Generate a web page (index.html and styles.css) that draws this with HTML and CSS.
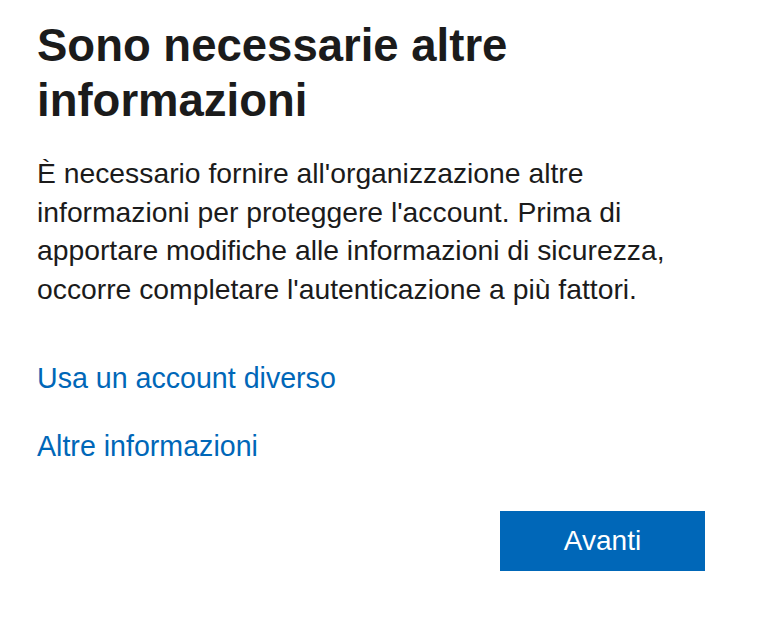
FILE: index.html
```html
<!DOCTYPE html>
<html lang="it">
<head>
<meta charset="utf-8">
<title>Sono necessarie altre informazioni</title>
<link rel="stylesheet" href="styles.css">
</head>
<body>
<main class="panel">
  <h1 class="title">Sono necessarie altre informazioni</h1>
  <p class="desc">È necessario fornire all'organizzazione altre informazioni per proteggere l'account. Prima di apportare modifiche alle informazioni di sicurezza, occorre completare l'autenticazione a più fattori.</p>
  <div class="links">
    <a class="link" href="#">Usa un account diverso</a>
    <a class="link" href="#">Altre informazioni</a>
  </div>
  <div class="actions">
    <button class="btn-primary" type="button">Avanti</button>
  </div>
</main>
</body>
</html>
```
FILE: styles.css
```css
html, body {
  margin: 0;
  padding: 0;
  background: #ffffff;
}
body {
  font-family: "Liberation Sans", Arial, Helvetica, sans-serif;
  color: #1b1b1b;
}
.panel {
  width: 668px;
  padding: 18px 0 0 37px;
  box-sizing: content-box;
}
.title {
  margin: 0;
  font-size: 45.5px;
  line-height: 55px;
  font-weight: 700;
  color: #1b1b1b;
}
.desc {
  margin: 26px 0 0;
  font-size: 28.3px;
  line-height: 38.5px;
}
.links {
  display: flex;
  flex-direction: column;
  align-items: flex-start;
  gap: 34px;
  margin-top: 53px;
}
.link {
  font-size: 28.6px;
  line-height: 34px;
  color: #0067b8;
  text-decoration: none;
}
.actions {
  display: flex;
  justify-content: flex-end;
  margin-top: 48px;
}
.btn-primary {
  width: 205px;
  height: 60px;
  border: none;
  background: #0067b8;
  color: #ffffff;
  font-family: "Liberation Sans", Arial, Helvetica, sans-serif;
  font-size: 28px;
  padding: 0;
}
```
